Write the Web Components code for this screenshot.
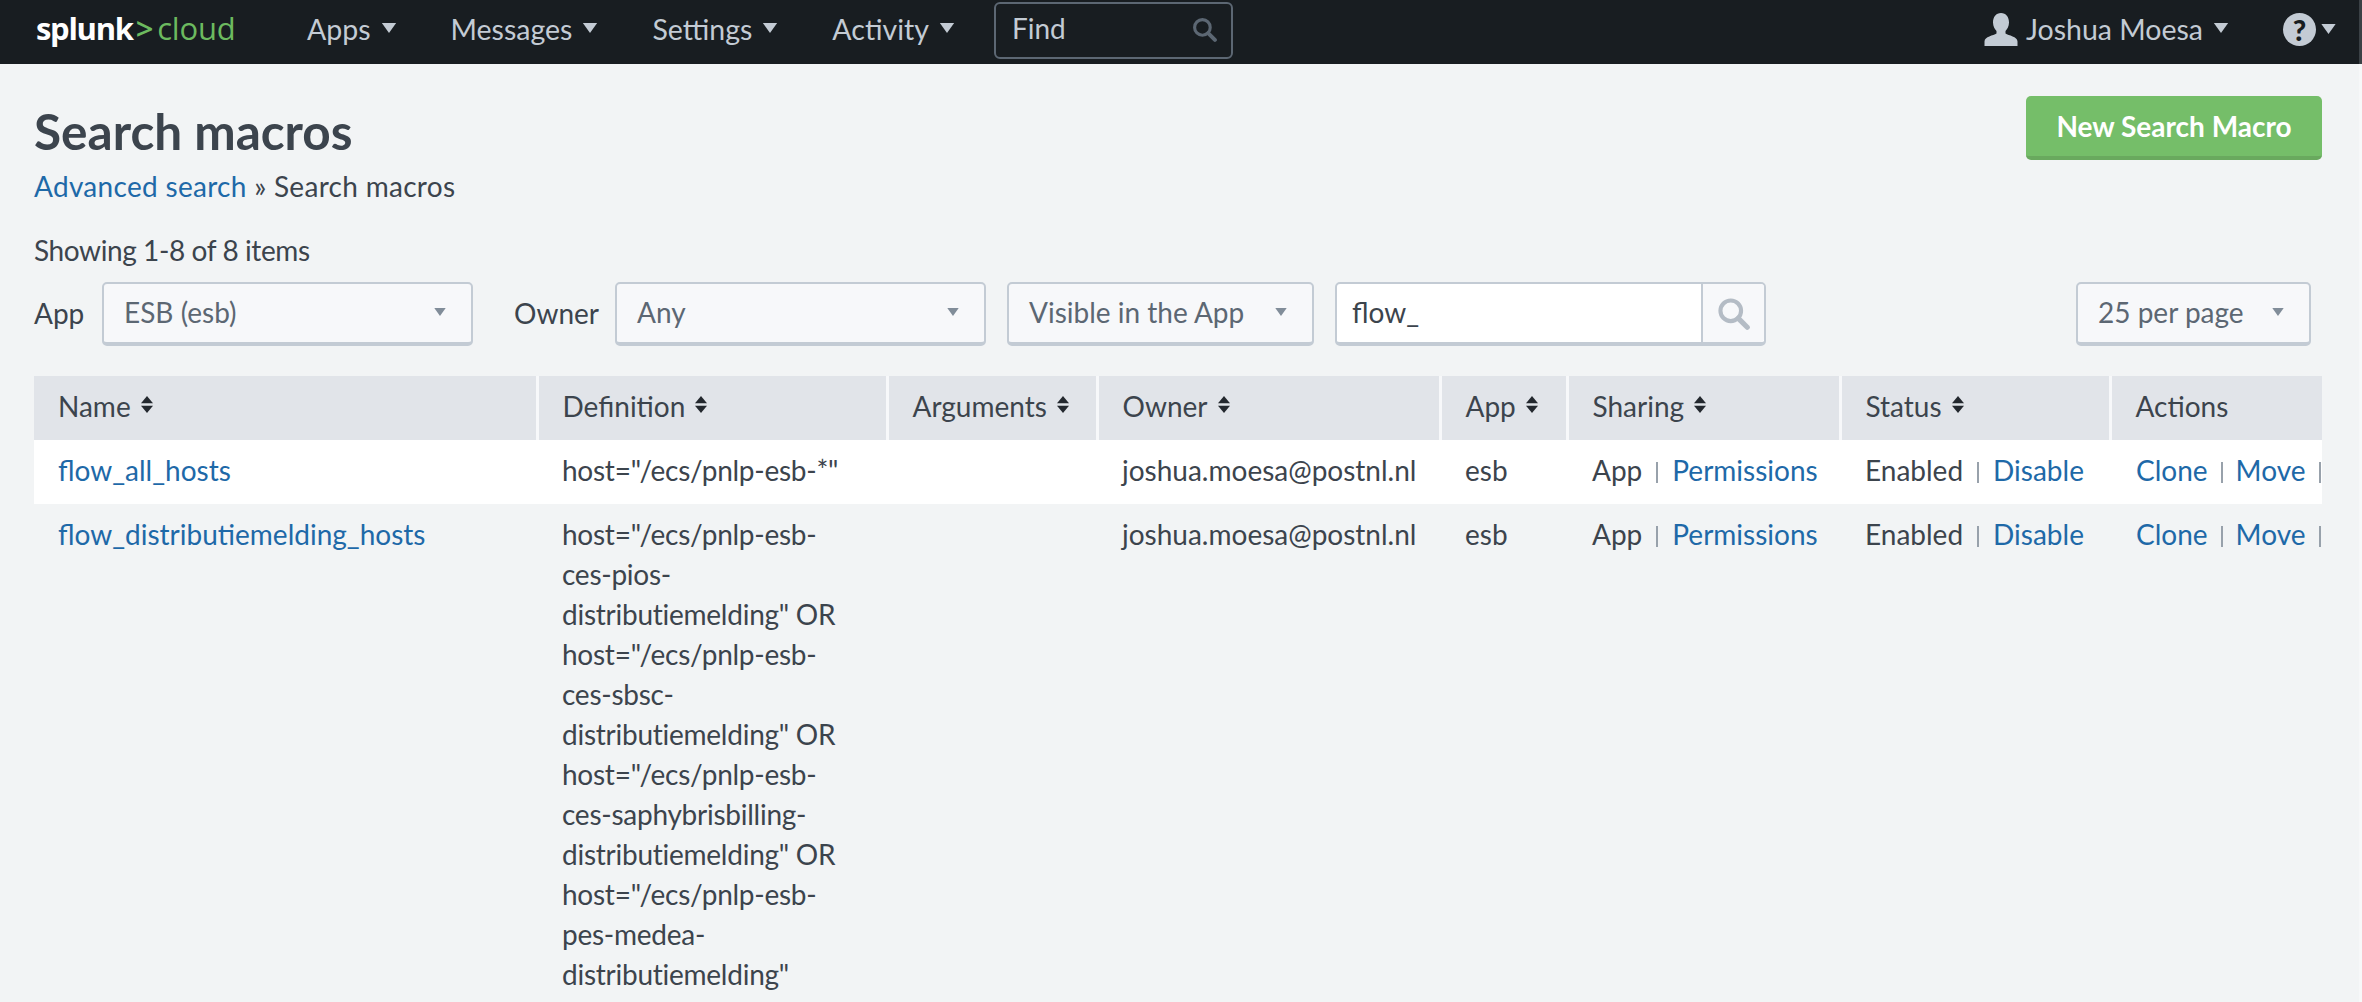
<!DOCTYPE html>
<html><head><meta charset="utf-8"><title>Search macros</title>
<style>
html,body{margin:0;padding:0;height:1002px;overflow:hidden;background:#f2f4f5}
body{font-family:Lato,"Liberation Sans",sans-serif;font-size:28px;color:#3c444d}
</style></head><body>
<app-root></app-root>
<script>
const I={
caret:(w,h,c)=>`<svg width="${w}" height="${h}" viewBox="0 0 10 7"><path d="M0 0H10L5 7Z" fill="${c}"/></svg>`,
search:(s,c,sw)=>`<svg width="${s}" height="${s}" viewBox="0 0 24 24" fill="none" stroke="${c}" stroke-width="${sw}"><circle cx="10" cy="10" r="7.5"/><path d="M15.5 15.5L22 22" stroke-linecap="round" stroke-width="${sw*1.25}"/></svg>`,
sort:`<svg width="12" height="17" viewBox="0 0 12 17" fill="#23282e"><path d="M6 0L12 7.200H0Z"/><path d="M6 17L12 9.800H0Z"/></svg>`};
class NavItem extends HTMLElement{constructor(){super();this.attachShadow({mode:'open'}).innerHTML=`<style>:host{display:inline-flex;align-items:center;gap:10px;color:#c3cbd4;font-size:28.500px;white-space:nowrap}svg{position:relative;top:-1px}</style><slot></slot>${I.caret(16,10,'#c3cbd4')}`}}
customElements.define('nav-item',NavItem);
class TopBar extends HTMLElement{constructor(){super();this.attachShadow({mode:'open'}).innerHTML=`<style>
:host{display:flex;align-items:center;height:64px;background:#181d21;padding:0 0 6px 36px;box-sizing:border-box;border-right:3px solid #3b4146}
.logo{display:flex;align-items:baseline;font-size:31px;width:271px;font-family:"Open Sans",sans-serif;line-height:1;position:relative;top:-1px}
.logo b{font-weight:700;color:#fff;letter-spacing:-1.300px}.logo i{font-style:normal;color:#6cba5f;font-weight:400;letter-spacing:-.2px}
.logo i.g{margin:0 4px 0 3px;font-weight:600}
.m{display:flex;gap:54px}
.find{margin:2px 0 0 39px;width:239px;height:57px;box-sizing:border-box;border:2px solid #5c6773;border-radius:6px;display:flex;align-items:center;justify-content:space-between;padding:0 14px 4px 16px;color:#c3cbd4;font-size:28px}
.find svg{position:relative;top:1px}
.r{margin-left:auto;display:flex;align-items:center}
.u{display:flex;align-items:center;gap:8px}
.h{display:flex;align-items:center;gap:5px;margin:0 23px 0 54px}
.q{width:33px;height:33px;border-radius:50%;background:#c3cbd4;color:#181d21;display:flex;align-items:center;justify-content:center;font-weight:900;font-size:29px;line-height:33px}
</style><div class="logo"><b>splunk</b><i class="g">&gt;</i><i>cloud</i></div>
<div class="m"><nav-item>Apps</nav-item><nav-item>Messages</nav-item><nav-item>Settings</nav-item><nav-item>Activity</nav-item></div>
<div class="find"><span>Find</span>${I.search(25,'#5c6773',3)}</div>
<div class="r"><div class="u"><svg width="34" height="33" viewBox="0 0 33 33" fill="#c3cbd4"><path d="M16.5 0c5 0 8 4 8 9.500 0 4-2 7-3.500 8.500v2.500c3 2 12 3 12 8V33H0v-4.500c0-5 9-6 12-8V18c-1.500-1.500-3.500-4.500-3.500-8.500C8.500 4 11.500 0 16.500 0Z"/></svg><nav-item>Joshua Moesa</nav-item></div>
<div class="h"><div class="q">?</div>${I.caret(15,10,'#c3cbd4')}</div></div>`}}
customElements.define('top-bar',TopBar);
class SelectBox extends HTMLElement{constructor(){super();const w=this.getAttribute('w');this.attachShadow({mode:'open'}).innerHTML=`<style>
:host{display:flex;align-items:center;justify-content:space-between;box-sizing:border-box;width:${w}px;height:64px;padding:0 25px 2px 20px;background:#f7f8fa;border:2px solid #c3cbd4;border-bottom-width:4px;border-radius:5px;color:#5c6773;font-size:28px;white-space:nowrap}
</style><slot></slot>${I.caret(12,8,'#818d99')}`}}
customElements.define('select-box',SelectBox);
class SearchBox extends HTMLElement{constructor(){super();this.attachShadow({mode:'open'}).innerHTML=`<style>
:host{display:flex;box-sizing:border-box;width:431px;height:64px;background:#fff;border:2px solid #c3cbd4;border-bottom-width:4px;border-radius:5px;font-size:28px;color:#3c444d}
.t{flex:1;padding:0 15px 2px;display:flex;align-items:center}.b{width:61px;background:#f7f8fa;border-left:2px solid #c3cbd4;display:flex;align-items:center;justify-content:center;border-radius:0 4px 4px 0}
</style><div class="t"><slot></slot></div><div class="b">${I.search(33,'#b4bcc5',3)}</div>`}}
customElements.define('search-box',SearchBox);
class SortHead extends HTMLElement{constructor(){super();this.attachShadow({mode:'open'}).innerHTML=`<style>:host{display:inline-flex;align-items:center;gap:10px}svg{position:relative;top:-1px}</style><slot></slot>${this.hasAttribute('nosort')?'':I.sort}`}}
customElements.define('sort-head',SortHead);
class MacroTable extends HTMLElement{constructor(){super();
const cols=[[503,'Name'],[350,'Definition'],[210,'Arguments'],[343,'Owner'],[127,'App'],[273,'Sharing'],[270,'Status'],[212,'Actions']];
const row=(n,d,w)=>`<tr class="${w?'w':''}"><td><a>${n}</a></td><td class="d">${d}</td><td></td><td>joshua.moesa@postnl.nl</td><td>esb</td><td>App<i></i><a>Permissions</a></td><td>Enabled<i></i><a>Disable</a></td><td class="act"><div><a>Clone</a><i></i><a>Move</a><i></i></div></td></tr>`;
this.attachShadow({mode:'open'}).innerHTML=`<style>
:host{display:block;width:2288px;overflow:hidden}
table{border-collapse:collapse;table-layout:fixed;width:2288px;font-size:28px}
th{background:#e1e4e9;height:64px;padding:0 22px 5px 24px;text-align:left;font-weight:400;border-left:3px solid #f7f8fa;color:#3c444d;box-sizing:border-box;white-space:nowrap}
th:first-child{border-left:0}
td{padding:10px 0 14px 25px;line-height:40px;vertical-align:top;box-sizing:border-box;white-space:nowrap;color:#3c444d}
td:first-child{padding-left:24px}
td.d{letter-spacing:-.25px}
td.act{padding-left:26px}
tr.w td{background:#fff}
a{color:#1e69a8}
i{display:inline-block;width:2px;height:21px;background:#98a1ab;margin:0 14px;vertical-align:-2px}
.act i{margin:0 13px}
.act div{overflow:hidden}
</style><table><colgroup>${cols.map(c=>`<col style="width:${c[0]}px">`).join('')}</colgroup>
<thead><tr>${cols.map(c=>`<th><sort-head ${c[1]=='Actions'?'nosort':''}>${c[1]}</sort-head></th>`).join('')}</tr></thead>
<tbody>${row('flow_all_hosts','host="/ecs/pnlp-esb-*"',1)}${row('flow_distributiemelding_hosts','host="/ecs/pnlp-esb-<br>ces-pios-<br>distributiemelding" OR<br>host="/ecs/pnlp-esb-<br>ces-sbsc-<br>distributiemelding" OR<br>host="/ecs/pnlp-esb-<br>ces-saphybrisbilling-<br>distributiemelding" OR<br>host="/ecs/pnlp-esb-<br>pes-medea-<br>distributiemelding"',0)}</tbody></table>`}}
customElements.define('macro-table',MacroTable);
class AppRoot extends HTMLElement{constructor(){super();this.attachShadow({mode:'open'}).innerHTML=`<style>
:host{display:block}
main{padding:34px 37px 0 34px;box-sizing:border-box;width:2362px;height:938px;border-right:3px solid #f7f8f9}
.head{display:flex;justify-content:space-between;align-items:flex-start}
h1{margin:0;font-size:49.500px;line-height:66px;font-weight:700;color:#3c444d}
.bc{line-height:40px;color:#3c444d;margin-top:2px;letter-spacing:.3px}.bc a{color:#1e69a8}
.btn{width:296px;height:64px;box-sizing:border-box;background:#75be69;border-bottom:4px solid #69a95e;border-radius:5px;color:#fff;font-weight:700;font-size:28px;display:flex;align-items:center;justify-content:center;margin-top:-2px}
.count{line-height:40px;margin-top:24px;letter-spacing:-.4px}
.f{display:flex;align-items:center;margin-top:12px;height:64px}
.l{white-space:nowrap;padding-bottom:2px}
</style><top-bar></top-bar><main>
<div class="head"><div><h1>Search macros</h1><div class="bc"><a>Advanced search</a> » Search macros</div></div><div class="btn">New Search Macro</div></div>
<div class="count">Showing 1-8 of 8 items</div>
<div class="f"><span class="l" style="width:68px">App</span><select-box w="371">ESB (esb)</select-box><span class="l" style="margin-left:41px;width:101px">Owner</span><select-box w="371">Any</select-box><select-box w="307" style="margin-left:21px">Visible in the App</select-box><search-box style="margin-left:21px">flow_</search-box><select-box w="235" style="margin-left:auto;margin-right:11px">25 per page</select-box></div>
<macro-table style="margin-top:30px"></macro-table>
</main>`}}
customElements.define('app-root',AppRoot);
</script></body></html>
